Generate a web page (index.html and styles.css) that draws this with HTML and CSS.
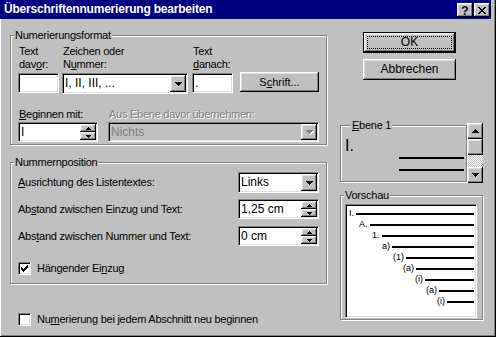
FILE: index.html
```html
<!DOCTYPE html>
<html>
<head>
<meta charset="utf-8">
<link rel="stylesheet" href="styles.css">
</head>
<body>
<div class="window">
  <div class="titlebar">
    <span class="title">Überschriftennumerierung bearbeiten</span>
    <div class="tbtns">
      <span class="tbtn raised help">?</span>
      <span class="tbtn raised"><svg width="8" height="7" viewBox="0 0 8 7" shape-rendering="crispEdges"><path d="M0 0h2v1h-2zM6 0h2v1h-2zM1 1h2v1h-2zM5 1h2v1h-2zM2 2h4v1h-4zM3 3h2v1h-2zM2 4h4v1h-4zM1 5h2v1h-2zM5 5h2v1h-2zM0 6h2v1h-2zM6 6h2v1h-2z"/></svg></span>
    </div>
  </div>
  <div class="client">
    <div class="left">
      <div class="group g1">
        <span class="legend">Numerierungsformat</span>
        <div class="row1">
          <div class="col">
            <div class="lbl2">Text<br>dav<u>o</u>r:</div>
            <div class="field w41"></div>
          </div>
          <div class="col c-zeichen">
            <div class="lbl2">Zeichen oder<br>N<u>u</u>mmer:</div>
            <div class="combo w126"><span class="val">I, II, III, ...</span><span class="dd raised"><svg width="7" height="4" viewBox="0 0 7 4" shape-rendering="crispEdges"><path d="M0 0h7v1h-1v1h-1v1h-1v1h-1v-1h-1v-1h-1v-1h-1z"/></svg></span></div>
          </div>
          <div class="col c-danach">
            <div class="lbl2">Text<br><u>d</u>anach:</div>
            <div class="field w41"><span class="val">.</span></div>
          </div>
          <div class="btn raised schrift">S<u>c</u>hrift...</div>
        </div>
        <div class="row2">
          <div class="col">
            <div class="lbl"><u>B</u>eginnen mit:</div>
            <div class="spin w80"><span class="val">I</span><span class="spinbtns"><span class="sb raised"><svg width="5" height="3" viewBox="0 0 5 3" shape-rendering="crispEdges"><path d="M2 0h1v1h1v1h1v1h-5v-1h1v-1h1z"/></svg></span><span class="sb raised"><svg width="5" height="3" viewBox="0 0 5 3" shape-rendering="crispEdges"><path d="M0 0h5v1h-1v1h-1v1h-1v-1h-1v-1h-1z"/></svg></span></span></div>
          </div>
          <div class="col c-aus">
            <div class="lbl disabled">Aus Ebene davor übernehmen:</div>
            <div class="combo combo-dis w211"><span class="val">Nichts</span><span class="dd raised"><svg class="dis-arrow" width="8" height="5" viewBox="0 0 8 5" shape-rendering="crispEdges"><path fill="#fff" d="M1 1h7v1h-1v1h-1v1h-1v1h-1v-1h-1v-1h-1v-1h-1z"/><path fill="#808080" d="M0 0h7v1h-1v1h-1v1h-1v1h-1v-1h-1v-1h-1v-1h-1z"/></svg></span></div>
          </div>
        </div>
      </div>

      <div class="group g2">
        <span class="legend">Nummernposition</span>
        <div class="grid">
          <div class="glbl"><u>A</u>usrichtung des Listentextes:</div>
          <div class="combo w81"><span class="val">Links</span><span class="dd raised"><svg width="7" height="4" viewBox="0 0 7 4" shape-rendering="crispEdges"><path d="M0 0h7v1h-1v1h-1v1h-1v1h-1v-1h-1v-1h-1v-1h-1z"/></svg></span></div>
          <div class="glbl">Ab<u>s</u>tand zwischen Einzug und Text:</div>
          <div class="spin w81"><span class="val">1,25 cm</span><span class="spinbtns"><span class="sb raised"><svg width="5" height="3" viewBox="0 0 5 3" shape-rendering="crispEdges"><path d="M2 0h1v1h1v1h1v1h-5v-1h1v-1h1z"/></svg></span><span class="sb raised"><svg width="5" height="3" viewBox="0 0 5 3" shape-rendering="crispEdges"><path d="M0 0h5v1h-1v1h-1v1h-1v-1h-1v-1h-1z"/></svg></span></span></div>
          <div class="glbl">Abs<u>t</u>and zwischen Nummer und Text:</div>
          <div class="spin w81"><span class="val">0 cm</span><span class="spinbtns"><span class="sb raised"><svg width="5" height="3" viewBox="0 0 5 3" shape-rendering="crispEdges"><path d="M2 0h1v1h1v1h1v1h-5v-1h1v-1h1z"/></svg></span><span class="sb raised"><svg width="5" height="3" viewBox="0 0 5 3" shape-rendering="crispEdges"><path d="M0 0h5v1h-1v1h-1v1h-1v-1h-1v-1h-1z"/></svg></span></span></div>
        </div>
        <div class="chk">
          <span class="box"><svg width="7" height="7" viewBox="0 0 7 7" shape-rendering="crispEdges"><path d="M0 2h1v3h-1zM1 3h1v3h-1zM2 4h1v3h-1zM3 3h1v3h-1zM4 2h1v3h-1zM5 1h1v3h-1zM6 0h1v3h-1z"/></svg></span>
          <span class="chklbl">Hängender Ei<u>n</u>zug</span>
        </div>
      </div>

      <div class="chk bottom">
        <span class="box"></span>
        <span class="chklbl">Nu<u>m</u>erierung bei jedem Abschnitt neu beginnen</span>
      </div>
    </div>

    <div class="right">
      <div class="btn raised okbtn"><span>OK</span></div>
      <div class="btn raised cancel">Abbrechen</div>

      <div class="ebene-row">
        <div class="group ebene">
          <span class="legend leg-ebene"><u>E</u>bene 1</span>
          <div class="lvl-num">I.</div>
          <div class="lvl-line first"></div>
          <div class="lvl-line"></div>
        </div>
        <div class="scroll">
          <span class="sbtn raised"><svg width="7" height="4" viewBox="0 0 7 4" shape-rendering="crispEdges"><path d="M3 0h1v1h1v1h1v1h1v1h-7v-1h1v-1h1v-1h1z"/></svg></span>
          <span class="thumb raised"></span>
          <span class="track"></span>
          <span class="sbtn raised"><svg width="7" height="4" viewBox="0 0 7 4" shape-rendering="crispEdges"><path d="M0 0h7v1h-1v1h-1v1h-1v1h-1v-1h-1v-1h-1v-1h-1z"/></svg></span>
        </div>
      </div>

      <div class="group vorschau">
        <span class="legend">Vorschau</span>
        <div class="preview">
          <div class="prow" style="margin-left:2px"><span>I.</span><i></i></div>
          <div class="prow" style="margin-left:12px"><span>A.</span><i></i></div>
          <div class="prow" style="margin-left:25px"><span>1.</span><i></i></div>
          <div class="prow" style="margin-left:35px"><span>a)</span><i></i></div>
          <div class="prow" style="margin-left:46px"><span>(1)</span><i></i></div>
          <div class="prow" style="margin-left:56px"><span>(a)</span><i></i></div>
          <div class="prow" style="margin-left:68px"><span>(i)</span><i></i></div>
          <div class="prow" style="margin-left:79px"><span>(a)</span><i></i></div>
          <div class="prow" style="margin-left:90px"><span>(i)</span><i></i></div>
        </div>
      </div>
    </div>
  </div>
</div>
</body>
</html>
```

FILE: styles.css
```css
* { box-sizing: border-box; }
html, body { margin: 0; padding: 0; background: #c0c0c0; }
body {
  font-family: "Liberation Sans", Arial, sans-serif;
  font-size: 11px;
  line-height: 13px;
  letter-spacing: -0.25px;
  color: #000;
}
u { text-decoration: underline; text-underline-offset: 1px; }
svg { display: block; }

.window {
  width: 496px;
  height: 337px;
  background: #c0c0c0;
  border-right: 1px solid #000;
  border-bottom: 1px solid #000;
  box-shadow: inset -1px -1px 0 #808080;
  overflow: hidden;
}

.titlebar {
  width: 491px;
  height: 19px;
  background: #000080;
  display: flex;
  justify-content: space-between;
  align-items: flex-start;
  padding: 0 1px 0 4px;
}
.title {
  color: #fff;
  font-weight: bold;
  font-size: 12px;
  line-height: 19px;
  letter-spacing: -0.2px;
}
.tbtns { display: flex; gap: 1px; margin-top: 3px; }
.tbtn {
  width: 16px;
  height: 14px;
  display: flex;
  align-items: center;
  justify-content: center;
}
.help { font-weight: bold; font-size: 12px; line-height: 14px; letter-spacing: 0; padding-top: 1px; }

.raised {
  background: #c0c0c0;
  box-shadow: inset -1px -1px 0 #000, inset 1px 1px 0 #fff, inset -2px -2px 0 #808080, inset 2px 2px 0 #dfdfdf;
}

.client {
  display: flex;
  align-items: flex-start;
  border-left: 1px solid #fff;
  height: 317px;
}
.left { padding-left: 9px; width: 326px; flex: none; }
.right { margin-left: 13px; width: 143px; flex: none; }

.group {
  position: relative;
  border: 1px solid #808080;
  box-shadow: inset 1px 1px 0 #fff, 1px 1px 0 #fff;
}
.legend {
  position: absolute;
  top: -7px;
  left: 3px;
  padding: 0 1px;
  background: #c0c0c0;
  line-height: 13px;
  white-space: nowrap;
}

.g1 { margin-top: 16px; width: 317px; padding: 9px 7px 2px 7px; }
.row1 { display: flex; align-items: flex-start; }
.row2 { display: flex; align-items: flex-start; margin-top: 14px; }
.col { display: flex; flex-direction: column; }
.lbl2 { height: 26px; margin-bottom: 2px; padding-left: 1px; white-space: nowrap; }
.lbl { height: 13px; margin-bottom: 1px; padding-left: 1px; white-space: nowrap; }
.c-zeichen { margin-left: 3px; }
.c-danach { margin-left: 4px; }
.c-aus { margin-left: 10px; }
.disabled { color: #808080; text-shadow: 1px 1px 0 #fff; }

.field, .combo, .spin {
  background: #fff;
  border: 1px solid;
  border-color: #808080 #fff #fff #808080;
  box-shadow: inset 1px 1px 0 #000, inset -1px -1px 0 #dfdfdf;
  padding: 1px;
  display: flex;
  align-items: stretch;
  font-size: 12px;
  letter-spacing: 0;
}
.val {
  flex: 1;
  display: flex;
  align-items: center;
  padding-left: 1px;
  white-space: nowrap;
  overflow: hidden;
}
.w41 { width: 41px; height: 20px; }
.w126 { width: 126px; height: 21px; }
.w80 { width: 80px; height: 20px; }
.w81 { width: 81px; height: 21px; }
.w211 { width: 211px; height: 20px; }
.grid .spin { height: 20px; align-self: start; }

.dd {
  width: 16px;
  flex: none;
  display: flex;
  align-items: center;
  justify-content: center;
}
.dd svg { margin-left: 1px; }
.combo-dis { background: #c0c0c0; }
.combo-dis .val { color: #808080; }
.dis-arrow { margin-top: 1px; }

.spinbtns { width: 16px; flex: none; display: flex; flex-direction: column; }
.sb { flex: 1; display: flex; align-items: center; justify-content: center; }

.btn {
  display: flex;
  align-items: center;
  justify-content: center;
  letter-spacing: 0;
}
.schrift { width: 79px; height: 20px; margin-left: 7px; margin-top: 27px; }

.g2 { margin-top: 17px; width: 317px; padding: 9px 7px 8px 7px; }
.grid {
  display: grid;
  grid-template-columns: 1fr 81px;
  grid-auto-rows: 21px;
  row-gap: 6px;
  align-items: center;
}
.glbl { white-space: nowrap; }

.chk { display: flex; align-items: center; height: 13px; margin-top: 15px; }
.chk.bottom { margin-top: 29px; padding-left: 8px; }
.box {
  width: 13px;
  height: 13px;
  flex: none;
  background: #fff;
  border: 1px solid;
  border-color: #808080 #fff #fff #808080;
  box-shadow: inset 1px 1px 0 #000, inset -1px -1px 0 #dfdfdf;
  display: flex;
  align-items: center;
  justify-content: center;
}
.chklbl { margin-left: 6px; white-space: nowrap; }

.okbtn {
  position: relative;
  margin: 13px 0 0 23px;
  width: 93px;
  height: 21px;
  border: 1px solid #000;
  font-size: 12px;
}
.okbtn::after {
  content: "";
  position: absolute;
  left: 3px; top: 3px; right: 3px; bottom: 3px;
  border: 1px dotted #000;
}
.cancel {
  margin: 6px 0 0 23px;
  width: 93px;
  height: 21px;
  font-size: 12px;
}

.ebene-row { display: flex; align-items: flex-start; margin-top: 43px; }
.ebene { width: 127px; height: 57px; margin-top: 2px; padding: 13px 0 0 4px; }
.leg-ebene { left: 10px; }
.lvl-num { font-size: 16px; line-height: 14px; height: 14px; letter-spacing: 0; }
.lvl-line { margin-left: 54px; width: 65px; height: 2px; background: #000; margin-top: 10px; }
.lvl-line.first { margin-top: 4px; }

.scroll { width: 16px; height: 60px; display: flex; flex-direction: column; flex: none; }
.sbtn { height: 16px; display: flex; align-items: center; justify-content: center; }
.thumb { height: 16px; }
.track {
  height: 12px;
  background: repeating-conic-gradient(#fff 0 25%, #c0c0c0 0 50%) 0 0 / 2px 2px;
}

.vorschau { margin-top: 12px; width: 143px; height: 125px; padding: 8px 0 0 4px; }
.preview {
  width: 132px;
  height: 114px;
  background: #fff;
  border: 1px solid;
  border-color: #808080 #fff #fff #808080;
  box-shadow: inset 1px 1px 0 #000, inset -1px -1px 0 #dfdfdf;
  padding: 3px 2px 0 1px;
}
.prow {
  display: flex;
  align-items: center;
  height: 11px;
  font-size: 9px;
  line-height: 11px;
  letter-spacing: 0;
}
.prow i {
  flex: 1;
  height: 2px;
  background: #000;
  margin-left: 2px;
}
```
